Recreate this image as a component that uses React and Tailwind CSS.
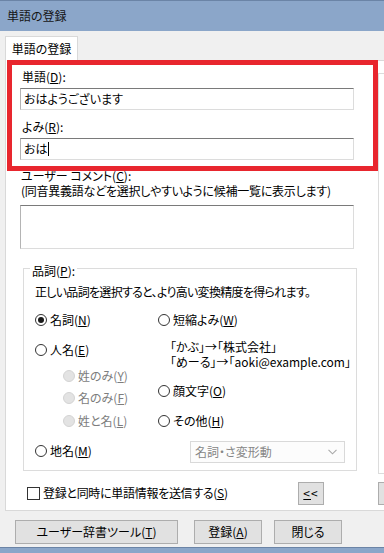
import React from "react";

function Radio({ checked, disabled, children, className = "" }) {
  return (
    <div className={`flex items-center h-[16px] ${className}`}>
      <span
        className={`w-[12px] h-[12px] rounded-full border flex items-center justify-center shrink-0 ${
          disabled ? "border-[#d4d4d4] bg-[#e3e3e3]" : "border-[#333333] bg-white"
        }`}
      >
        {checked && <span className="w-[6px] h-[6px] rounded-full bg-[#1a1a1a]" />}
      </span>
      <span className={`ml-[3px] leading-[16px] whitespace-nowrap ${disabled ? "text-[#7d7d7d]" : "text-black"}`}>
        {children}
      </span>
    </div>
  );
}

function TextBox({ children, className = "" }) {
  return (
    <div
      className={`w-[334px] bg-white border border-[#dcdcdc] border-t-[#7a7a7a] border-l-[#b4b4b4] flex items-start pl-[2px] ${className}`}
    >
      {children}
    </div>
  );
}

function Button({ children, className = "" }) {
  return (
    <div
      className={`h-[24px] bg-[#e1e1e1] border border-[#adadad] flex items-center justify-center leading-[16px] whitespace-nowrap ${className}`}
    >
      {children}
    </div>
  );
}

export default function App() {
  return (
    <div className="relative w-[384px] h-[553px] overflow-hidden bg-[#f0f0f0] flex flex-col text-[12px] text-black [font-family:'Noto_Sans_CJK_JP','Noto_Sans',sans-serif] [font-feature-settings:'palt']">
      {/* title bar */}
      <div className="h-[31px] shrink-0 bg-[#8ba6c9] border-t border-[#6b84a6] flex items-center pl-[7px] text-[#151515] leading-[16px]">
        単語の登録
      </div>

      {/* tab strip */}
      <div className="h-[29px] shrink-0 flex items-end pl-[5px]">
        <div className="relative top-[1px] z-10 h-[25px] w-[73px] bg-white border border-b-0 border-[#d9d9d9] flex items-center justify-center leading-[16px]">
          単語の登録
        </div>
      </div>

      {/* tab panel */}
      <div className="ml-[5px] w-[400px] h-[451px] shrink-0 bg-white border border-[#d9d9d9] flex">
        {/* left column */}
        <div className="w-[372px] shrink-0 pl-[14px] flex flex-col">
          <div className="mt-[8px] h-[16px] leading-[16px] pl-[2px]">
            単語(<u>D</u>):
          </div>
          <TextBox className="mt-[3px] h-[22px]">
            <span className="leading-[20px] pl-[1px]">おはようございます</span>
          </TextBox>
          <div className="mt-[9px] h-[16px] leading-[16px] pl-[2px]">
            よみ(<u>R</u>):
          </div>
          <TextBox className="mt-[3px] h-[22px]">
            <span className="leading-[20px] pl-[1px]">おは</span>
            <span className="mt-[3px] w-px h-[14px] bg-black" />
          </TextBox>
          <div className="mt-[8px] h-[15px] leading-[15px] pl-[1px]">
            ユーザー コメント(<u>C</u>):
          </div>
          <div className="h-[16px] leading-[16px] pl-[1px] whitespace-nowrap tracking-[-0.25px]">
            (同音異義語などを選択しやすいように候補一覧に表示します)
          </div>
          <TextBox className="mt-[6px] h-[44px]" />

          {/* group box */}
          <div className="mt-[19px] ml-[3px] w-[334px] h-[203px] border border-[#dcdcdc] pl-[11px] flex flex-col">
            <div className="-mt-[7px] -ml-[5px] h-[16px]">
              <span className="inline-block bg-white px-[2px] h-[16px] leading-[16px]">
                品詞(<u>P</u>):
              </span>
            </div>
            <div className="mt-[6px] h-[16px] leading-[16px] whitespace-nowrap tracking-[-0.7px]">
              正しい品詞を選択すると、より高い変換精度を得られます。
            </div>
            <div className="mt-[12px] flex items-start">
              <div className="w-[123px] shrink-0 flex flex-col">
                <Radio checked>
                  名詞(<u>N</u>)
                </Radio>
                <Radio className="mt-[14px]">
                  人名(<u>E</u>)
                </Radio>
                <Radio disabled className="mt-[10px] ml-[28px]">
                  姓のみ(<u>Y</u>)
                </Radio>
                <Radio disabled className="mt-[6px] ml-[28px]">
                  名のみ(<u>F</u>)
                </Radio>
                <Radio disabled className="mt-[7px] ml-[28px]">
                  姓と名(<u>L</u>)
                </Radio>
                <Radio className="mt-[14px]">
                  地名(<u>M</u>)
                </Radio>
              </div>
              <div className="flex flex-col">
                <Radio>
                  短縮よみ(<u>W</u>)
                </Radio>
                <div className="mt-[11px] pl-[12px] h-[15px] leading-[15px] whitespace-nowrap">
                  「かぶ」→「株式会社」
                </div>
                <div className="pl-[12px] h-[15px] leading-[15px] whitespace-nowrap">
                  「めーる」→「aoki@example.com」
                </div>
                <Radio className="mt-[14px]">
                  顔文字(<u>O</u>)
                </Radio>
                <Radio className="mt-[14px]">
                  その他(<u>H</u>)
                </Radio>
                <div className="mt-[12px] ml-[32px] w-[155px] h-[22px] border border-[#d9d9d9] bg-[#fcfcfc] flex items-center pl-[4px] pr-[7px] text-[#868686]">
                  <span className="leading-[16px] flex-1">名詞・さ変形動</span>
                  <svg width="9" height="6" viewBox="0 0 9 6" className="shrink-0">
                    <polyline points="0.5,0.8 4.5,4.8 8.5,0.8" fill="none" stroke="#a8a8a8" strokeWidth="1.1" />
                  </svg>
                </div>
              </div>
            </div>
          </div>

          {/* checkbox row */}
          <div className="mt-[11px] w-[334px] h-[22px] flex items-center">
            <span className="ml-[7px] w-[13px] h-[13px] border border-[#333333] bg-white shrink-0" />
            <span className="ml-[3px] leading-[16px] whitespace-nowrap tracking-[-0.3px]">
              登録と同時に単語情報を送信する(<u>S</u>)
            </span>
            <div className="ml-auto mr-[30px] w-[26px] h-[23px] bg-[#e1e1e1] border border-[#adadad] flex items-center justify-center text-[12px] leading-[14px] tracking-[1px]">
              <u>&lt;</u>&lt;
            </div>
          </div>
        </div>

        {/* right column (cut off) */}
        <div className="flex flex-col">
          <div className="mt-[12px] w-[30px] h-[401px] border-l border-t border-b border-[#dcdcdc]" />
          <div className="mt-[8px] w-[30px] h-[23px] bg-[#e1e1e1] border border-[#adadad]" />
        </div>
      </div>

      {/* bottom buttons */}
      <div className="mt-[9px] pl-[15px] flex">
        <Button className="w-[163px]">
          ユーザー辞書ツール(<u>T</u>)
        </Button>
        <Button className="ml-[16px] w-[68px]">
          登録(<u>A</u>)
        </Button>
        <Button className="ml-[12px] w-[68px]">閉じる</Button>
      </div>

      <div className="flex-1" />
      <div className="h-[6px] shrink-0 bg-[#8ba6c9] border-t border-[#6b84a6]" />

      {/* red annotation box */}
      <div className="absolute left-[7px] top-[60px] w-[371px] h-[111px] border-[5px] border-[#e8262e] pointer-events-none z-20" />
    </div>
  );
}
